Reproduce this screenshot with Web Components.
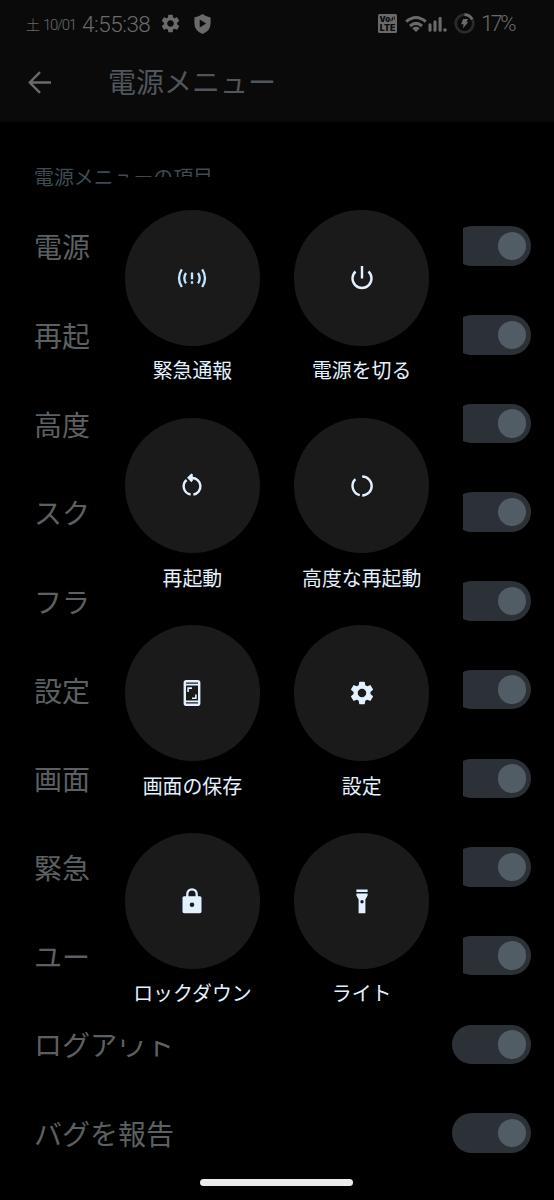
<!DOCTYPE html>
<html lang="ja">
<head>
<meta charset="utf-8">
<title>電源メニュー</title>
<style>
  body {
    margin: 0;
    background: #000;
    font-family: "Noto Sans CJK JP", sans-serif;
  }
</style>
</head>
<body>
<power-screen></power-screen>

<script>
const GEAR = 'M19.14 12.94c.04-.3.06-.61.06-.94 0-.32-.02-.64-.07-.94l2.03-1.58c.18-.14.23-.41.12-.61l-1.92-3.32c-.12-.22-.37-.29-.59-.22l-2.39.96c-.5-.38-1.03-.7-1.62-.94l-.36-2.54c-.04-.24-.24-.41-.48-.41h-3.84c-.24 0-.43.17-.47.41l-.36 2.54c-.59.24-1.13.57-1.62.94l-2.39-.96c-.22-.08-.47 0-.59.22L2.74 8.87c-.12.21-.08.47.12.61l2.03 1.58c-.05.3-.09.63-.09.94s.02.64.07.94l-2.03 1.58c-.18.14-.23.41-.12.61l1.92 3.32c.12.22.37.29.59.22l2.39-.96c.5.38 1.03.7 1.62.94l.36 2.54c.05.24.24.41.48.41h3.84c.24 0 .44-.17.47-.41l.36-2.54c.59-.24 1.13-.56 1.62-.94l2.39.96c.22.08.47 0 .59-.22l1.92-3.32c.12-.22.07-.47-.12-.61l-2.01-1.58zM12 15.6c-1.98 0-3.6-1.62-3.6-3.6s1.62-3.6 3.6-3.6 3.6 1.62 3.6 3.6-1.62 3.6-3.6 3.6z'

// Icons of the round buttons, drawn round the origin
const icons = {
  emergency: `<g fill="none" stroke="#c3e7ff" stroke-width="2.3">
    <path d="M-10.2-8.6Q-15.8.2-10.2 9M10.2-8.6Q15.8.2 10.2 9"/>
    <path d="M-6-5Q-9.4.2-6 5.4M6-5Q9.4.2 6 5.4M0-5.6V1.2M0 3.2V5.8"/></g>`,
  power: `<path fill="none" stroke="currentColor" stroke-width="2.4" d="M0-12V.4M-6.5-6.5A9.5 9.5 0 1 0 6.5-6.5"/>`,
  restart: `<path fill="none" stroke="currentColor" stroke-width="2.4" d="M-5.4-5A8.3 8.3 0 0 0-1.4 9.5M1.4 9.5A8.3 8.3 0 0 0 0-7H-2"/>
    <path fill="currentColor" d="M-5-7.2-.6-11.4.8-10.4V-4.4L-.6-2.8z"/>`,
  advanced: `<path fill="none" stroke="currentColor" stroke-width="2.4" d="M-6.6-5.8A9.5 9.5 0 0 0-2.2 10.2M.2 10.5A9.5 9.5 0 0 0 .2-8.5"/>`,
  screenshot: `<rect x="-7.2" y="-11.8" width="14.4" height="23.6" rx="1.6" fill="none" stroke="currentColor" stroke-width="2.4"/>
    <path fill="none" stroke="currentColor" stroke-width="1.8" d="M-7-8.3H7M-7 8.3H7"/>
    <path fill="none" stroke="currentColor" stroke-width="1.6" d="M-3.9-1V-4.9H0M3.9 1.4V5.2H0"/>`,
  settings: `<path fill="currentColor" transform="scale(1.18) translate(-12 -12)" d="${GEAR}"/>`,
  lock: `<path fill="none" stroke="currentColor" stroke-width="2.3" d="M-4.7-4V-7A4.7 4.7 0 0 1 4.7-7V-4"/>
    <path fill="currentColor" fill-rule="evenodd" d="M-7.9-4.8H7.9A1.6 1.6 0 0 1 9.5-3.2V10.6A1.6 1.6 0 0 1 7.9 12.2H-7.9A1.6 1.6 0 0 1-9.5 10.6V-3.2A1.6 1.6 0 0 1-7.9-4.8zM0 1.5A2.3 2.3 0 0 0 0 6.1 2.3 2.3 0 0 0 0 1.5z"/>`,
  flashlight: `<path fill="currentColor" fill-rule="evenodd" d="M-5.6-11.6H5.6V-9H-5.6zM-5.6-7.4H5.6V-5.6L3.4-1.6V12.2H-3.4V-1.6L-5.6-5.6zM0-.9A1.7 1.7 0 0 0 0 2.5 1.7 1.7 0 0 0 0-.9z"/>`
}

/**
 * Status bar with the clock on the left and the radio icons on the right.
 */
class StatusBar extends HTMLElement {
  constructor () {
    super()
    this.attachShadow({ mode: 'open' }).innerHTML = `
      <style>
        :host {
          display: flex;
          align-items: center;
          justify-content: space-between;
          box-sizing: border-box;
          height: 47px;
          padding: 0 39px 0 26px;
          color: #6a6a6a;
          font-family: Roboto, "Noto Sans CJK JP", sans-serif;
          font-weight: 300;
        }
        div { display: flex; align-items: center; }
        svg { display: block; flex: none; }
        span { white-space: nowrap; line-height: 24px; }
        .date { width: 56px; font-size: 15px; letter-spacing: -1.3px; padding-top: 3px; }
        .day { font-size: 14px; letter-spacing: .6px; }
        .time { width: 78px; font-size: 22.5px; letter-spacing: -.5px; }
        .level { width: 34px; font-size: 22px; letter-spacing: -2.6px; margin-left: 6px; }
        text { font: 900 8.5px Inter, sans-serif; }
        .vo { font-size: 7.5px; }
      </style>
      <div>
        <span class="date"><span class="day">土</span> 10/01</span>
        <span class="time">4:55:38</span>
        <svg width="21" height="21" viewBox="1.5 1.5 21 21"><path fill="currentColor" transform="translate(12 12) scale(.92) translate(-12 -12)" d="${GEAR}"/></svg>
        <svg width="17" height="20" viewBox="0 0 17 20" style="margin-left:12.5px"><path fill="currentColor" fill-rule="evenodd" d="M8.5 0Q12.5 3 16.6 3.4V9.2Q16.6 16.6 8.5 20 .4 16.6.4 9.2V3.4Q4.5 3 8.5 0zM5.7 5.6V13.4L12.2 9.5z"/></svg>
      </div>
      <div>
        <svg width="19" height="19" viewBox="0 0 19 19">
          <rect width="19" height="19" rx="1.6" fill="currentColor"/>
          <g fill="#0a0a0a">
            <text class="vo" x="1.6" y="7.6" textLength="10.4" lengthAdjust="spacingAndGlyphs">Vo</text>
            <text x="1.8" y="17.4" textLength="15.6" lengthAdjust="spacingAndGlyphs">LTE</text>
            <path d="M12.5 4.5H13.4V7.4H12.5zM14.2 3H15V6.4H14.2zM15.8 2.2H16.6V6H15.8z"/>
          </g>
        </svg>
        <svg width="22" height="18" viewBox="0 0 22 18" style="margin-left:8px">
          <g fill="none" stroke="currentColor" stroke-width="3"><path d="M1.2 6.7Q11-1.6 20.8 6.7M5 11Q11 5.8 17 11"/></g>
          <path fill="currentColor" d="M7.2 13.2Q11 10.4 14.8 13.2L11 17z"/>
        </svg>
        <svg width="19" height="17" viewBox="0 0 19 17" style="margin-left:1.5px">
          <path fill="none" stroke="currentColor" stroke-width="3.1" stroke-linecap="round" d="M2 9.8V15.2M7 6.8V15.2M12.1 3.4V15.2"/>
          <circle cx="17" cy="15" r="1.8" fill="currentColor"/>
        </svg>
        <svg width="21" height="21" viewBox="-10.5 -10.5 21 21" style="margin-left:7px">
          <circle r="8.8" fill="none" stroke="#2b2b2b" stroke-width="2.8"/>
          <path fill="none" stroke="currentColor" stroke-width="2.8" d="M0-8.8A8.8 8.8 0 0 1 7.7-4.3"/>
          <path fill="currentColor" d="M-1.4-4.6H3.6L1.9-1.6H3.8L-1.6 5-.9.8H-3.4z"/>
        </svg>
        <span class="level">17%</span>
      </div>`
  }
}
customElements.define('status-bar', StatusBar)

/**
 * App bar with a back arrow and the title in the slot.
 */
class AppBar extends HTMLElement {
  constructor () {
    super()
    this.attachShadow({ mode: 'open' }).innerHTML = `
      <style>
        :host {
          display: flex;
          align-items: center;
          box-sizing: border-box;
          height: 70px;
          padding-left: 28px;
          gap: 57px;
          color: #50565c;
          font-size: 28px;
          line-height: 40px;
        }
        span { margin-top: -3px; }
      </style>
      <svg width="23" height="23" viewBox="0 0 23 23"><path fill="none" stroke="#6a6a6a" stroke-width="2.4" d="M23 11.5H2M12 1.2 1.8 11.5 12 21.8"/></svg>
      <span><slot></slot></span>`
  }
}
customElements.define('app-bar', AppBar)

/**
 * Settings row with a switch that is turned on.
 */
class SwitchRow extends HTMLElement {
  constructor () {
    super()
    this.attachShadow({ mode: 'open' }).innerHTML = `
      <style>
        :host {
          display: flex;
          align-items: center;
          justify-content: space-between;
          box-sizing: border-box;
          height: 88.7px;
          padding: 0 22.7px 0 34px;
          color: #5c6063;
          font-size: 28px;
          line-height: 40px;
        }
        i {
          display: flex;
          align-items: center;
          justify-content: flex-end;
          box-sizing: border-box;
          width: 79px;
          height: 39.5px;
          padding-right: 5.3px;
          border-radius: 20px;
          background: #2b3137;
        }
        i::after {
          content: "";
          width: 28.5px;
          height: 28.5px;
          border-radius: 50%;
          background: #515c65;
        }
      </style>
      <span><slot></slot></span><i></i>`
  }
}
customElements.define('switch-row', SwitchRow)

/**
 * Round button of the power menu. The icon attribute picks the drawing.
 */
class PowerAction extends HTMLElement {
  connectedCallback () {
    this.attachShadow({ mode: 'open' }).innerHTML = `
      <style>
        :host {
          display: flex;
          flex-direction: column;
          align-items: center;
          height: 207.7px;
          color: #e3f0ff;
          font-size: 19.9px;
          line-height: 28px;
          white-space: nowrap;
        }
        div {
          display: grid;
          place-items: center;
          width: 135.5px;
          height: 135.5px;
          margin-bottom: 10.8px;
          border-radius: 50%;
          background: #1a1a1a;
        }
      </style>
      <div><svg width="34" height="34" viewBox="-17 -17 34 34">${icons[this.getAttribute('icon')]}</svg></div>
      <span><slot></slot></span>`
  }
}
customElements.define('power-action', PowerAction)

/**
 * The whole screen: the settings page with the power menu on top.
 */
class PowerScreen extends HTMLElement {
  constructor () {
    super()
    this.attachShadow({ mode: 'open' }).innerHTML = `
      <style>
        :host {
          display: block;
          position: relative;
          width: 554px;
          height: 1200px;
          overflow: hidden;
          background: #000;
        }
        header { height: 121.5px; background: #0a0a0a; }
        h2 {
          margin: 0;
          padding: 41.5px 0 10.8px 34px;
          color: #3f4b54;
          font-size: 19.9px;
          font-weight: 400;
          line-height: 28px;
        }
        .menu {
          position: absolute;
          left: 91px;
          top: 176.5px;
          box-sizing: border-box;
          width: 372px;
          height: 864.5px;
          padding: 33.5px 16.7px 0 16.8px;
          border-radius: 42px;
          background: #000;
          display: grid;
          grid-template-columns: 1fr 1fr;
          align-content: start;
        }
        .handle {
          position: absolute;
          left: 200px;
          top: 1179px;
          width: 153px;
          height: 7px;
          border-radius: 4px;
          background: #ebebeb;
        }
      </style>
      <header>
        <status-bar></status-bar>
        <app-bar>電源メニュー</app-bar>
      </header>
      <h2>電源メニューの項目</h2>
      <switch-row>電源</switch-row>
      <switch-row>再起</switch-row>
      <switch-row>高度</switch-row>
      <switch-row>スク</switch-row>
      <switch-row>フラ</switch-row>
      <switch-row>設定</switch-row>
      <switch-row>画面</switch-row>
      <switch-row>緊急</switch-row>
      <switch-row>ユー</switch-row>
      <switch-row>ログアウト</switch-row>
      <switch-row>バグを報告</switch-row>
      <section class="menu">
        <power-action icon="emergency">緊急通報</power-action>
        <power-action icon="power">電源を切る</power-action>
        <power-action icon="restart">再起動</power-action>
        <power-action icon="advanced">高度な再起動</power-action>
        <power-action icon="screenshot">画面の保存</power-action>
        <power-action icon="settings">設定</power-action>
        <power-action icon="lock">ロックダウン</power-action>
        <power-action icon="flashlight">ライト</power-action>
      </section>
      <div class="handle"></div>`
  }
}
customElements.define('power-screen', PowerScreen)
</script>
</body>
</html>
